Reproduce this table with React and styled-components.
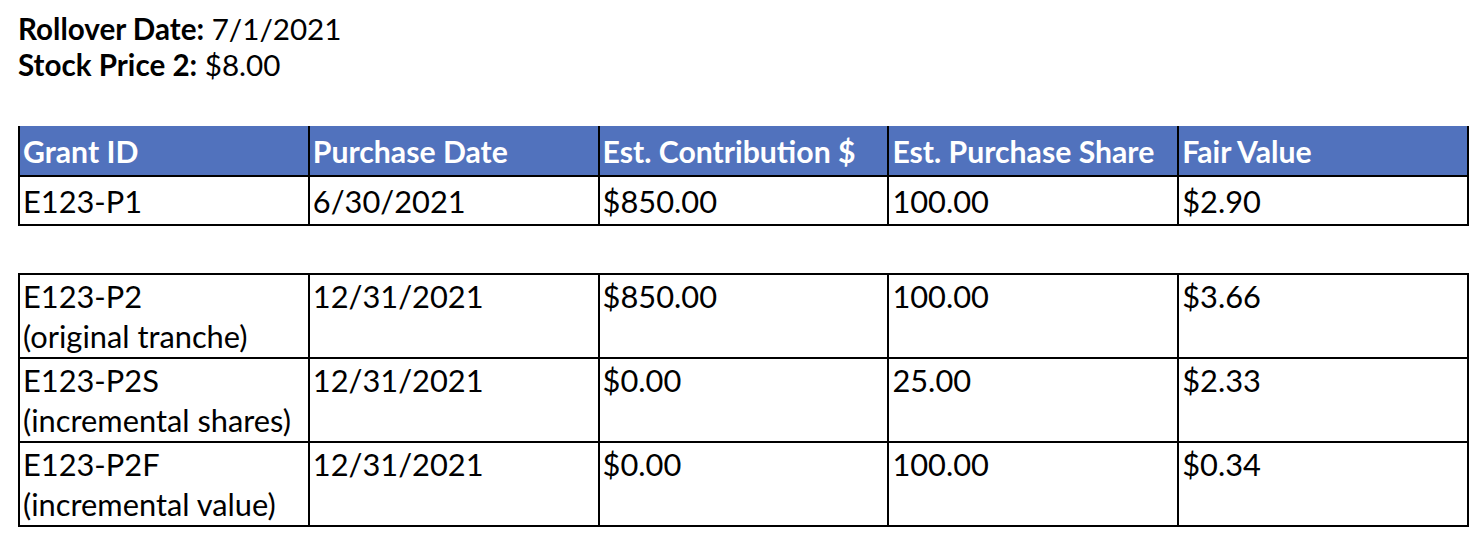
import React from "react";
import styled, { createGlobalStyle } from "styled-components";

const GlobalStyle = createGlobalStyle`
  body {
    margin: 0;
    background: #ffffff;
    font-family: "Lato", "Liberation Sans", sans-serif;
    color: #000000;
  }
`;

const Page = styled.div`
  padding: 11px 18px 0 18px;
  width: 1451px;
`;

const Info = styled.div`
  font-size: 29.6px;
  line-height: 36px;
  margin-bottom: 43px;
`;

const Label = styled.span`
  font-weight: 700;
`;

const Table = styled.table`
  width: 1451px;
  border-collapse: collapse;
  table-layout: fixed;
  margin-bottom: ${({ gap }) => gap || 0}px;
`;

const Th = styled.th`
  background: #5172bd;
  color: #ffffff;
  font-weight: 700;
  font-size: 30.2px;
  text-align: left;
  height: 49px;
  padding: 0 3px;
  border-left: 2px solid #000;
  border-right: 2px solid #000;
  border-bottom: 2px solid #000;
  vertical-align: middle;
`;

const Td = styled.td`
  font-size: 30.8px;
  line-height: 40px;
  text-align: left;
  vertical-align: top;
  padding: ${({ tall }) => (tall ? "2px 3px 0" : "5px 3px 2px")};
  border: 2px solid #000;
`;

const headers = [
  "Grant ID",
  "Purchase Date",
  "Est. Contribution $",
  "Est. Purchase Share",
  "Fair Value",
];

const tranches = [
  ["E123-P2", "(original tranche)", "12/31/2021", "$850.00", "100.00", "$3.66"],
  ["E123-P2S", "(incremental shares)", "12/31/2021", "$0.00", "25.00", "$2.33"],
  ["E123-P2F", "(incremental value)", "12/31/2021", "$0.00", "100.00", "$0.34"],
];

export default function App() {
  return (
    <>
      <GlobalStyle />
      <Page>
        <Info>
          <div>
            <Label>Rollover Date:</Label> 7/1/2021
          </div>
          <div>
            <Label>Stock Price 2:</Label> $8.00
          </div>
        </Info>

        <Table gap={47}>
          <thead>
            <tr>
              {headers.map((h) => (
                <Th key={h}>{h}</Th>
              ))}
            </tr>
          </thead>
          <tbody>
            <tr>
              <Td>E123-P1</Td>
              <Td>6/30/2021</Td>
              <Td>$850.00</Td>
              <Td>100.00</Td>
              <Td>$2.90</Td>
            </tr>
          </tbody>
        </Table>

        <Table>
          <tbody>
            {tranches.map(([id, note, date, contrib, share, fair]) => (
              <tr key={id}>
                <Td tall>
                  {id}
                  <br />
                  {note}
                </Td>
                <Td tall>{date}</Td>
                <Td tall>{contrib}</Td>
                <Td tall>{share}</Td>
                <Td tall>{fair}</Td>
              </tr>
            ))}
          </tbody>
        </Table>
      </Page>
    </>
  );
}
